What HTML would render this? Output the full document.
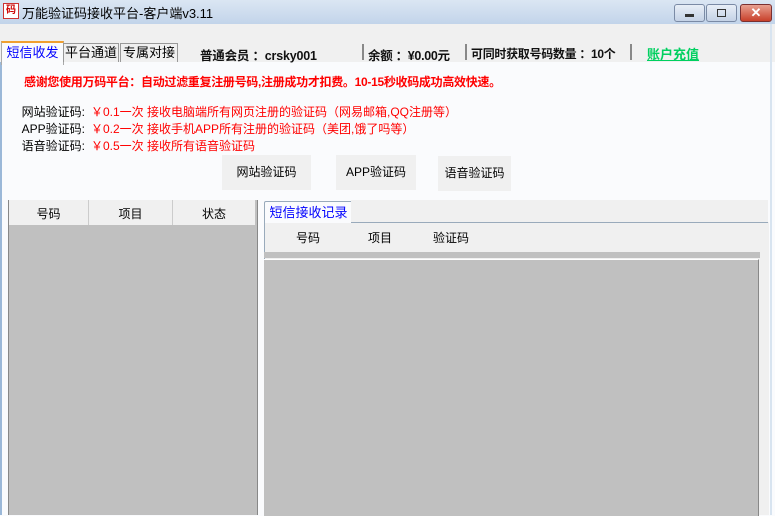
<!DOCTYPE html>
<html><head><meta charset="utf-8"><style>
body{margin:0;width:775px;height:515px;overflow:hidden;position:relative;font-family:"Liberation Sans","Noto Sans CJK SC","WenQuanYi Zen Hei",sans-serif;font-size:12px;background:#fafbfd}
.a{position:absolute}
</style></head><body>
<div class="a" style="left:0;top:0;width:775px;height:24px;background:linear-gradient(#dbe6f3,#c2d4ea)"></div>
<div class="a" style="left:3px;top:3px;width:14px;height:14px;background:#fff;border:1px solid #c33;color:#c00;font-size:10px;line-height:14px;text-align:center;font-weight:bold">码</div>
<div class="a" style="left:22px;top:3px;font-size:13px;color:#000">万能验证码接收平台-客户端v3.11</div>
<div class="a" style="left:674px;top:4px;width:29px;height:16px;border:1px solid #7a8aa5;border-radius:3px;background:linear-gradient(#e8eef7,#c4d2e6)"><div class="a" style="left:10px;top:9px;width:9px;height:3px;background:#333"></div></div>
<div class="a" style="left:706px;top:4px;width:29px;height:16px;border:1px solid #7a8aa5;border-radius:3px;background:linear-gradient(#e8eef7,#c4d2e6)"><div class="a" style="left:10px;top:4px;width:7px;height:6px;border:1px solid #333"></div></div>
<div class="a" style="left:740px;top:4px;width:30px;height:16px;border:1px solid #7a3030;border-radius:3px;background:linear-gradient(#e8a090,#c8402a);color:#fff;font-weight:bold;text-align:center;line-height:16px;font-size:13px">✕</div>
<div class="a" style="left:0;top:24px;width:775px;height:38px;background:#f0f0f0"></div>
<div class="a" style="left:0;top:62px;width:2px;height:453px;background:#9bb8d8"></div>
<div class="a" style="left:770px;top:24px;width:2px;height:491px;background:#d8e4f0"></div>
<div class="a" style="left:1px;top:41px;width:61px;height:22px;background:#fafbfd;border:1px solid #aaa;border-bottom:none;border-top:2px solid #f0a030;color:#00f;font-size:13px;line-height:20px;text-align:center">短信收发</div>
<div class="a" style="left:63px;top:43px;width:54px;height:18px;border:1px solid #999;border-bottom:none;font-size:13px;line-height:18px;text-align:center">平台通道</div>
<div class="a" style="left:120px;top:43px;width:56px;height:18px;border:1px solid #999;border-bottom:none;font-size:13px;line-height:18px;text-align:center">专属对接</div>
<div class="a" style="left:200px;top:45px;font-size:12.5px;font-weight:bold;color:#111;letter-spacing:-0.2px">普通会员 ：crsky001</div>
<div class="a" style="left:362px;top:44px;width:2px;height:16px;background:#888"></div>
<div class="a" style="left:368px;top:45px;font-size:12.5px;font-weight:bold;color:#111;letter-spacing:-0.3px">余额 ：¥0.00元</div>
<div class="a" style="left:465px;top:44px;width:2px;height:16px;background:#888"></div>
<div class="a" style="left:471px;top:45px;font-size:12px;font-weight:bold;color:#111;letter-spacing:-0.3px">可同时获取号码数量 ：10个</div>
<div class="a" style="left:630px;top:44px;width:2px;height:16px;background:#888"></div>
<div class="a" style="left:647px;top:44px;font-size:13px;font-weight:bold;color:#00d060;text-decoration:underline">账户充值</div>
<div class="a" style="left:24px;top:73px;font-size:12px;font-weight:bold;color:#f00;letter-spacing:-0.3px">感谢您使用万码平台：自动过滤重复注册号码,注册成功才扣费。10-15秒收码成功高效快速。</div>
<div class="a" style="left:15px;top:104px;line-height:17px;font-size:12px;color:#000;text-align:right;width:70px">网站验证码:<br>APP验证码:<br>语音验证码:</div>
<div class="a" style="left:91px;top:104px;line-height:17px;font-size:12px;color:#f00">￥0.1一次 接收电脑端所有网页注册的验证码（网易邮箱,QQ注册等）<br>￥0.2一次 接收手机APP所有注册的验证码（美团,饿了吗等）<br>￥0.5一次 接收所有语音验证码</div>
<div class="a" style="left:222px;top:155px;width:89px;height:35px;background:#f0f0f0;line-height:35px;text-align:center">网站验证码</div>
<div class="a" style="left:336px;top:155px;width:80px;height:35px;background:#f0f0f0;line-height:35px;text-align:center">APP验证码</div>
<div class="a" style="left:438px;top:156px;width:73px;height:35px;background:#f0f0f0;line-height:35px;text-align:center">语音验证码</div>
<div class="a" style="left:8px;top:200px;width:248px;height:315px;background:#c0c0c0;border-left:1px solid #888;border-right:1px solid #888"></div>
<div class="a" style="left:9px;top:200px;width:246px;height:25px;background:#f0f0f0"></div>
<div class="a" style="left:88px;top:200px;width:1px;height:25px;background:#ccc"></div>
<div class="a" style="left:172px;top:200px;width:1px;height:25px;background:#ccc"></div>
<div class="a" style="left:9px;top:205px;width:79px;text-align:center">号码</div>
<div class="a" style="left:89px;top:205px;width:83px;text-align:center">项目</div>
<div class="a" style="left:173px;top:205px;width:82px;text-align:center">状态</div>
<div class="a" style="left:264px;top:222px;width:504px;height:293px;background:#f0f0f0;border-left:1px solid #9ab"></div>
<div class="a" style="left:264px;top:201px;width:87px;height:21px;background:#fafbfd;border:1px solid #9ab;border-bottom:none;border-radius:2px 2px 0 0;color:#00f;font-size:13px;line-height:21px;text-align:center">短信接收记录</div>
<div class="a" style="left:351px;top:200px;width:417px;height:22px;background:#f0f0f0;border-bottom:1px solid #9ab"></div>
<div class="a" style="left:296px;top:229px">号码</div>
<div class="a" style="left:368px;top:229px">项目</div>
<div class="a" style="left:433px;top:229px">验证码</div>
<div class="a" style="left:264px;top:252px;width:496px;height:6px;background:#c0c0c0"></div>
<div class="a" style="left:264px;top:259px;width:494px;height:256px;background:#c0c0c0;border-top:1px solid #fff;border-right:1px solid #888"></div>
</body></html>
